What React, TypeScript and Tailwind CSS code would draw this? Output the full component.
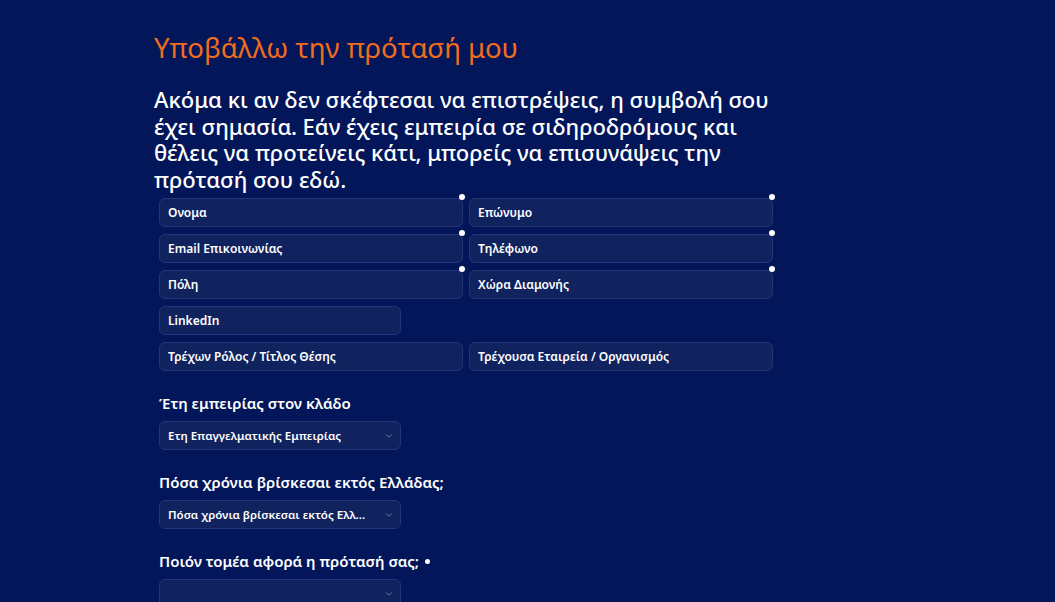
import React from 'react';
import { ChevronDown } from 'lucide-react';

type Field = { label: string; required?: boolean };

const rows: (Field | null)[][] = [
  [{ label: 'Ονομα', required: true }, { label: 'Επώνυμο', required: true }],
  [{ label: 'Email Επικοινωνίας', required: true }, { label: 'Τηλέφωνο', required: true }],
  [{ label: 'Πόλη', required: true }, { label: 'Χώρα Διαμονής', required: true }],
  [{ label: 'LinkedIn' }, null],
  [{ label: 'Τρέχων Ρόλος / Τίτλος Θέσης' }, { label: 'Τρέχουσα Εταιρεία / Οργανισμός' }],
];

const selects = [
  { label: 'Έτη εμπειρίας στον κλάδο', value: 'Ετη Επαγγελματικής Εμπειρίας' },
  { label: 'Πόσα χρόνια βρίσκεσαι εκτός Ελλάδας;', value: 'Πόσα χρόνια βρίσκεσαι εκτός Ελλ...' },
  { label: 'Ποιόν τομέα αφορά η πρότασή σας;', value: '', required: true },
];

const Asterisk = () => (
  <span className="absolute -top-[4px] -right-[2px] w-[6px] h-[6px] rounded-full bg-white" />
);

const Input = ({ field, short }: { field: Field; short?: boolean }) => (
  <div className={`relative ${short ? 'w-[242px]' : 'w-full'}`}>
    <div className="h-[29px] rounded-[6px] bg-[#11235f] border border-[#22347a] flex items-center px-[8px] text-[12px] font-semibold text-white">
      {field.label}
    </div>
    {field.required && <Asterisk />}
  </div>
);

export default function App() {
  return (
    <div
      className="min-h-screen w-full bg-[#03165a] pl-[154px] pt-[30px] pb-10 text-white"
      style={{ fontFamily: '"Noto Sans", "DejaVu Sans", sans-serif' }}
    >
      <h1 className="text-[27.5px] leading-[36px] font-normal text-[#f26c1d]">Υποβάλλω την πρότασή μου</h1>
      <p className="mt-[20px] w-[640px] text-[22px] leading-[26.5px] font-medium text-white">
        Ακόμα κι αν δεν σκέφτεσαι να επιστρέψεις, η συμβολή σου έχει σημασία. Εάν έχεις εμπειρία σε
        σιδηροδρόμους και θέλεις να προτείνεις κάτι, μπορείς να επισυνάψεις την πρότασή σου εδώ.
      </p>

      <div className="ml-[5px] mt-[6px] w-[614px] flex flex-col gap-[7px]">
        {rows.map((row, i) => (
          <div key={i} className="grid grid-cols-2 gap-[6px]">
            {row.map((f, j) => (f ? <Input key={j} field={f} short={i === 3} /> : <div key={j} />))}
          </div>
        ))}
      </div>

      <div className="ml-[5px] mt-[22px] flex flex-col gap-[22px]">
        {selects.map((s) => (
          <div key={s.label} className="flex flex-col gap-[8px]">
            <div className="flex items-center gap-[6px] text-[15px] font-semibold leading-[20px]">
              {s.label}
              {s.required && <span className="w-[5px] h-[5px] rounded-full bg-white" />}
            </div>
            <div className="w-[242px] h-[29px] rounded-[6px] bg-[#11235f] border border-[#22347a] flex items-center justify-between pl-[8px] pr-[6px]">
              <span className="text-[11.5px] font-semibold text-white truncate">{s.value}</span>
              <ChevronDown className="w-[10px] h-[10px] text-[#7d8cc2] shrink-0" strokeWidth={2} />
            </div>
          </div>
        ))}
      </div>
    </div>
  );
}
